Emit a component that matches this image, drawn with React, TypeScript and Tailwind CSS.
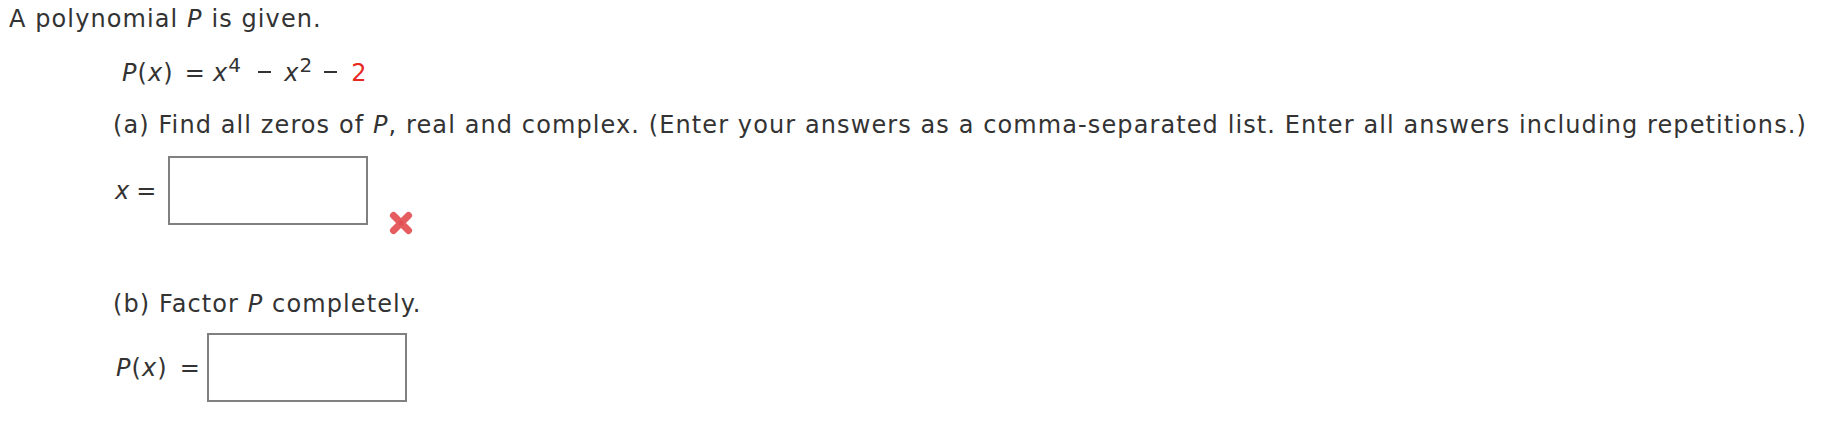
import React from 'react';

const Sup: React.FC<{ children: React.ReactNode }> = ({ children }) => (
  <span className="relative -top-[9px] text-[20px]">{children}</span>
);

const Minus: React.FC<{ className?: string }> = ({ className }) => (
  <span
    aria-label="minus"
    className={`relative -top-[8px] inline-block w-[13px] h-[2px] bg-[#333] ${className ?? ''}`}
  />
);

const AnswerBox: React.FC = () => (
  <div className="w-[200px] h-[69px] border-2 border-[#808080] bg-white" />
);

const WrongMark: React.FC = () => (
  <svg width="30" height="30" viewBox="0 0 30 30" className="blur-[0.6px]">
    <path d="M7.5 7.5 L22.5 22.5 M22.5 7.5 L7.5 22.5" stroke="#e65d5f" strokeWidth="7" strokeLinecap="round" />
    <circle cx="15" cy="15" r="2.5" fill="#d94446" opacity="0.5" />
  </svg>
);

export default function App() {
  return (
    <div className="min-h-screen bg-white text-[#333] font-['DejaVu_Sans',Verdana,sans-serif] text-[24px] leading-[28px] tracking-[1.1px] pl-[9px] pt-[5px]">
      <div className="h-[28px] whitespace-nowrap">
        A polynomial <i>P</i> is given.
      </div>

      <div className="pl-[104px]">
        <div className="mt-[26px] h-[28px] pl-[9px] whitespace-nowrap">
          <i>P</i>(<i>x</i>)
          <span className="ml-[11px]">=</span>
          <i className="ml-[7px]">x</i>
          <Sup>4</Sup>
          <Minus className="ml-[16px]" />
          <i className="ml-[13px]">x</i>
          <Sup>2</Sup>
          <Minus className="ml-[11px]" />
          <span className="ml-[14px] text-[#e8281e]">2</span>
        </div>

        <div className="mt-[24px] h-[28px] whitespace-nowrap">
          (a) Find all zeros of <i>P</i>, real and complex. (Enter your answers as a comma-separated list. Enter all answers including repetitions.)
        </div>

        <div className="mt-[17px] flex items-start">
          <div className="h-[69px] flex items-center pl-[2px] pr-[10px] whitespace-nowrap">
            <i>x</i>
            <span className="ml-[6px]">=</span>
          </div>
          <AnswerBox />
          <div className="ml-[18px] mt-[52px]">
            <WrongMark />
          </div>
        </div>

        <div className="mt-[52px] h-[28px] whitespace-nowrap">
          (b) Factor <i>P</i> completely.
        </div>

        <div className="mt-[15px] flex items-start">
          <div className="h-[69px] flex items-center pl-[3px] pr-[6px] whitespace-nowrap">
            <i>P</i>(<i>x</i>)
            <span className="ml-[12px]">=</span>
          </div>
          <AnswerBox />
        </div>
      </div>
    </div>
  );
}
